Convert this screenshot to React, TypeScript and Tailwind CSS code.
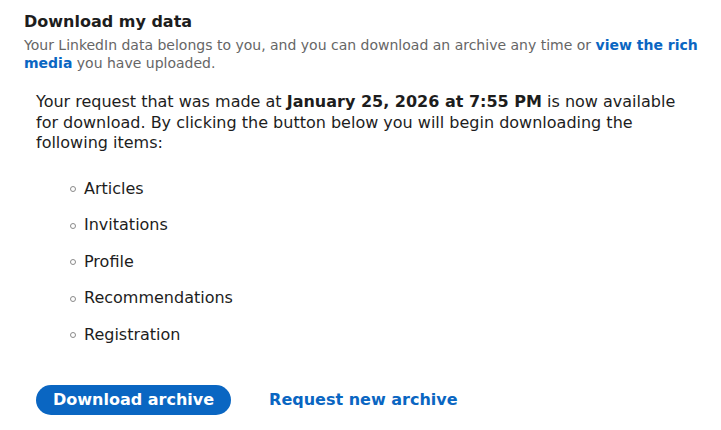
export default function App() {
  const items = ["Articles", "Invitations", "Profile", "Recommendations", "Registration"];
  return (
    <div className="bg-white w-[721px] h-[430px] overflow-hidden" style={{ fontFamily: '"DejaVu Sans", sans-serif' }}>
      <div className="pl-6 pr-4 pt-[12px]">
        <h2 className="text-[16px] leading-[20px] font-bold text-[#1d1d1d]">Download my data</h2>
        <p className="mt-[4px] text-[14px] leading-[18px] text-[#666666]">
          Your LinkedIn data belongs to you, and you can download an archive any time or{" "}
          <a className="font-bold text-[#0a66c2]">view the rich media</a> you have uploaded.
        </p>
      </div>
      <div className="pl-9 pr-[32px] pt-[20px]">
        <p className="text-[16px] leading-[20.5px] text-[#1d1d1d]">
          Your request that was made at <b>January 25, 2026 at 7:55 PM</b> is now available for download. By clicking the button below you will begin downloading the following items:
        </p>
        <ul className="mt-[25px] pl-[34px] flex flex-col gap-[16.5px] text-[16px] leading-[20px] text-[#1d1d1d]">
          {items.map((t) => (
            <li key={t} className="flex items-center gap-[8px]">
              <span className="w-[6px] h-[6px] rounded-full border border-[#8a8a8a] mt-[1px]" />
              <span>{t}</span>
            </li>
          ))}
        </ul>
        <div className="mt-[40px] flex items-center gap-[38px]">
          <button className="h-[30px] px-[17px] rounded-full bg-[#0a66c2] text-white text-[16px] font-bold">Download archive</button>
          <a className="text-[16px] font-bold text-[#0a66c2]">Request new archive</a>
        </div>
      </div>
    </div>
  );
}
